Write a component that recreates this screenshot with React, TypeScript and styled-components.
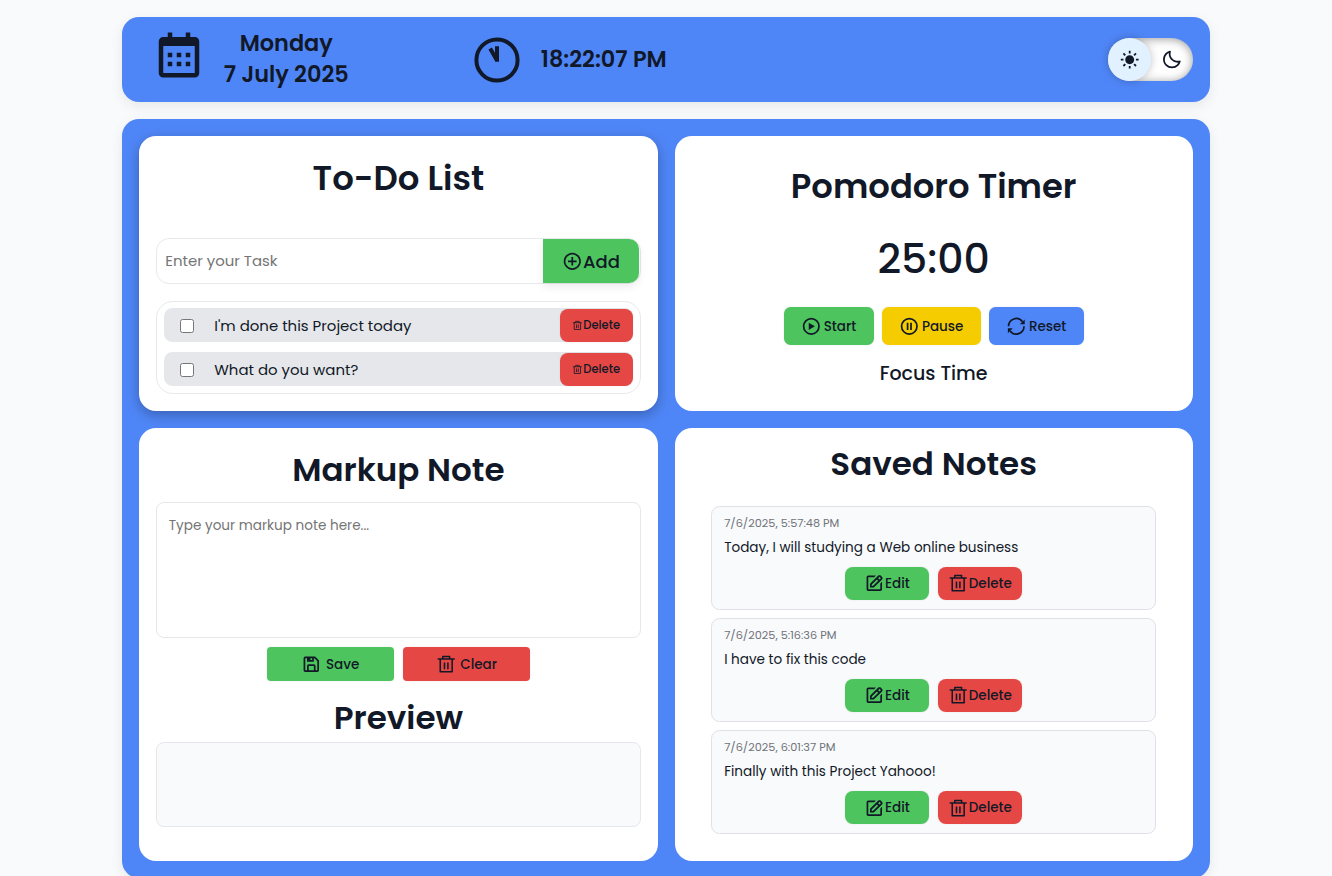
import React from "react";
import styled, { createGlobalStyle } from "styled-components";
import { BiCalendar, BiSolidSun, BiMoon, BiPlusCircle, BiSave, BiEdit } from "react-icons/bi";

const Global = createGlobalStyle`
  * { box-sizing: border-box; }
  html, body { margin: 0; height: 100%; overflow: hidden; }
  body { background: #f9fafc; color: #111827; font-family: Poppins, Inter, sans-serif; }
  button, input, textarea { font-family: inherit; color: inherit; margin: 0; }
  h1, h2, p { margin: 0; }
  svg { display: block; flex: none; }
`;

const tones = { green: "#4dc45d", red: "#e54844", yellow: "#f5cc00", blue: "#4f86f7" };
type Tone = keyof typeof tones;

const Page = styled.div`
  width: 1087.5px;
  margin: 0 auto;
  padding-top: 17px;
`;

const Header = styled.header`
  height: 85px;
  display: flex;
  align-items: center;
  padding: 0 16.5px 0 30.2px;
  border-radius: 17px;
  background: ${tones.blue};
  box-shadow: 0 4px 13px rgba(0, 0, 0, 0.08);
`;

const Calendar = styled.div`
  display: flex;
  align-items: center;
  height: 76px;
  padding-bottom: 9px;
`;

const HeaderText = styled.div`
  width: 126px;
  font-size: 22.4px;
  font-weight: 600;
  line-height: 31px;
  text-align: center;
  white-space: nowrap;
`;

const DateText = styled(HeaderText)`
  width: 140px;
  margin: 0 117.5px 0 9.8px;
  padding-bottom: 1.5px;
`;

const ClockFace = styled.svg`
  margin-right: 21px;
`;

const Toggle = styled.div`
  display: flex;
  width: 85px;
  height: 43px;
  margin-left: auto;
  border-radius: 22px;
  background: #fff;
  box-shadow: inset 0 1px 10px rgba(0, 0, 0, 0.4);
`;

const ToggleSide = styled.span<{ $active?: boolean }>`
  width: 43px;
  height: 43px;
  display: grid;
  place-items: center;
  border-radius: 50%;
  background: ${(p) => (p.$active ? "#e1f1ff" : "transparent")};
  box-shadow: ${(p) => (p.$active ? "0 0 9px rgba(0, 0, 0, 0.25)" : "none")};
`;

const Board = styled.main`
  display: grid;
  grid-template-columns: 1fr 1fr;
  grid-template-rows: 275px 433px;
  gap: 17px;
  height: 759px;
  margin-top: 17px;
  padding: 17px;
  border-radius: 17px;
  background: ${tones.blue};
  box-shadow: 0 4px 13px rgba(0, 0, 0, 0.08);
`;

const Card = styled.section<{ $raised?: boolean; $top: number }>`
  display: flex;
  flex-direction: column;
  align-items: center;
  padding: ${(p) => p.$top}px 17px 0;
  border-radius: 17px;
  background: #fff;
  box-shadow: ${(p) => (p.$raised ? "0 4px 13px rgba(0, 0, 0, 0.28)" : "none")};
`;

const Title = styled.h2<{ $size?: number }>`
  font-size: ${(p) => p.$size ?? 32.6}px;
  font-weight: 600;
  line-height: 50px;
  white-space: nowrap;
`;

const TaskForm = styled.div`
  display: flex;
  width: 100%;
  height: 46px;
  margin-top: 35px;
  padding-right: 1px;
  border: 1px solid #e8e9ec;
  border-radius: 13px;
`;

const TaskInput = styled.input`
  flex: 1;
  min-width: 0;
  padding: 0 8px;
  border: 0;
  outline: 0;
  background: transparent;
  font-size: 14.95px;
  &::placeholder { color: #757575; opacity: 1; }
`;

const AddButton = styled.button`
  display: flex;
  align-items: center;
  justify-content: center;
  width: 96px;
  padding: 0 0 0 1.5px;
  border: 0;
  border-radius: 0 10px 10px 0;
  background: ${tones.green};
  box-shadow: 0 4px 8px rgba(0, 0, 0, 0.08);
  font-size: 18px;
  font-weight: 500;
`;

const TaskList = styled.div`
  display: flex;
  flex-direction: column;
  gap: 10px;
  width: 100%;
  height: 93px;
  margin-top: 17px;
  padding: 6px 7px;
  border: 1px solid #e8e9ec;
  border-radius: 17px;
`;

const TaskRow = styled.label`
  display: flex;
  align-items: center;
  height: 34px;
  border-radius: 8.5px;
  background: #e5e7eb;
  font-size: 14.95px;
`;

const Check = styled.input`
  width: 14px;
  height: 14px;
  margin: 1px 20px 0 16px;
`;

const TaskName = styled.span`
  flex: 1;
  padding-top: 1.5px;
`;

const Button = styled.button<{
  $tone: Tone; $width: number; $height: number; $gap?: number;
  $size?: number; $radius?: number;
}>`
  display: flex;
  align-items: center;
  justify-content: center;
  gap: ${(p) => p.$gap ?? 0}px;
  width: ${(p) => p.$width}px;
  height: ${(p) => p.$height}px;
  padding: 0;
  border: 0;
  border-radius: ${(p) => p.$radius ?? 6.5}px;
  background: ${(p) => tones[p.$tone]};
  box-shadow: 0 0 2px rgba(0, 0, 0, 0.1);
  font-size: ${(p) => p.$size ?? 13.5}px;
  font-weight: 500;
`;

const Label = styled.span`
  padding-top: 1px;
`;

const ButtonRow = styled.div<{ $top: number; $gap: number }>`
  display: flex;
  justify-content: center;
  gap: ${(p) => p.$gap}px;
  margin-top: ${(p) => p.$top}px;
`;

const Countdown = styled.div`
  margin-top: 17px;
  font-size: 41px;
  font-weight: 500;
  line-height: 60px;
`;

const Mode = styled.p`
  margin-top: 14px;
  font-size: 19px;
  font-weight: 500;
  line-height: 30px;
`;

const NoteArea = styled.textarea`
  display: block;
  width: 100%;
  height: 136px;
  margin-top: 7px;
  padding: 13px 11.5px;
  border: 1px solid #e5e7eb;
  border-radius: 8px;
  outline: 0;
  resize: none;
  font-size: 13.6px;
  line-height: 20px;
  &::placeholder { color: #757575; opacity: 1; }
`;

const Preview = styled.div`
  width: 100%;
  height: 85px;
  margin-top: -1px;
  border: 1px solid #e5e7eb;
  border-radius: 8px;
  background: #f9fafc;
`;

const Notes = styled.div`
  display: flex;
  flex-direction: column;
  gap: 8.5px;
  width: 445px;
  margin-top: 17px;
`;

const Note = styled.article`
  height: 103.7px;
  padding: 7px 12px 0;
  border: 1px solid #dfe1e5;
  border-radius: 8.5px;
  background: #f9fafc;
`;

const NoteDate = styled.p`
  color: #6f7379;
  font-size: 11.3px;
  line-height: 18px;
`;

const NoteText = styled.p`
  margin-top: 6px;
  font-size: 13.58px;
  line-height: 20px;
`;

const TrashIcon = ({ size = 20.4 }: { size?: number }) => (
  <svg width={size} height={size} viewBox="0 0 24 24" fill="none" stroke="currentColor" strokeWidth="1.8" strokeLinejoin="round">
    <path d="M2 6h20M5 6v15h14V6M8 6V3h8v3M10 10v8M14 10v8" />
  </svg>
);

const PlayIcon = () => (
  <svg width="20.6" height="20.6" viewBox="0 0 24 24" fill="none" stroke="currentColor" strokeWidth="2">
    <circle cx="12" cy="12" r="9" />
    <path d="M9 7.8v8.4l7.2-4.2z" fill="currentColor" stroke="none" />
  </svg>
);

const PauseIcon = () => (
  <svg width="20.6" height="20.6" viewBox="0 0 24 24" fill="none" stroke="currentColor" strokeWidth="2">
    <circle cx="12" cy="12" r="9" />
    <path d="M10 7.8v8.4M14 7.8v8.4" />
  </svg>
);

const ResetIcon = () => (
  <svg width="20.6" height="20.6" viewBox="0 0 24 24" fill="none" stroke="currentColor" strokeWidth="2">
    <path d="M3 12A9 9 0 0 1 19.2 6.6M21 12A9 9 0 0 1 4.8 17.4" />
    <path d="M21.8 4v5.6h-5.6zM2.2 20v-5.6h5.6z" fill="currentColor" stroke="none" />
  </svg>
);

const tasks = ["I'm done this Project today", "What do you want?"];

const notes = [
  { date: "7/6/2025, 5:57:48 PM", text: "Today, I will studying a Web online business" },
  { date: "7/6/2025, 5:16:36 PM", text: "I have to fix this code" },
  { date: "7/6/2025, 6:01:37 PM", text: "Finally with this Project Yahooo!" },
];

export default function App() {
  return (
    <>
      <Global />
      <Page>
        <Header>
          <Calendar><BiCalendar size={54} /></Calendar>
          <DateText>Monday<br />7 July 2025</DateText>
          <ClockFace width="46" height="46" viewBox="0 0 46 46" fill="none" stroke="currentColor" strokeWidth="4">
            <circle cx="23" cy="23" r="20.6" />
            <path d="M23 9.3v15.5M16.2 11.4 23 23.4" />
          </ClockFace>
          <HeaderText>18:22:07 PM</HeaderText>
          <Toggle>
            <ToggleSide $active><BiSolidSun size={21.4} /></ToggleSide>
            <ToggleSide><BiMoon size={21.4} /></ToggleSide>
          </Toggle>
        </Header>
        <Board>
          <Card $raised $top={17}>
            <Title $size={33.9}>To-Do List</Title>
            <TaskForm>
              <TaskInput placeholder="Enter your Task" />
              <AddButton><BiPlusCircle size={20.6} />Add</AddButton>
            </TaskForm>
            <TaskList>
              {tasks.map((name) => (
                <TaskRow key={name}>
                  <Check type="checkbox" />
                  <TaskName>{name}</TaskName>
                  <Button $tone="red" $width={72.5} $height={33} $size={11.5} $radius={8}>
                    <TrashIcon size={10.8} />Delete
                  </Button>
                </TaskRow>
              ))}
            </TaskList>
          </Card>
          <Card $top={26}>
            <Title $size={33.8}>Pomodoro Timer</Title>
            <Countdown>25:00</Countdown>
            <ButtonRow $top={18} $gap={8.5}>
              <Button $tone="green" $width={90} $height={38} $gap={2}><PlayIcon /><Label>Start</Label></Button>
              <Button $tone="yellow" $width={98.5} $height={38} $gap={2}><PauseIcon /><Label>Pause</Label></Button>
              <Button $tone="blue" $width={94.5} $height={38} $gap={2}><ResetIcon /><Label>Reset</Label></Button>
            </ButtonRow>
            <Mode>Focus Time</Mode>
          </Card>
          <Card $top={17}>
            <Title>Markup Note</Title>
            <NoteArea placeholder="Type your markup note here..." />
            <ButtonRow $top={9} $gap={8.5}>
              <Button $tone="green" $width={127.5} $height={34} $gap={4} $radius={4}><BiSave size={20.6} /><Label>Save</Label></Button>
              <Button $tone="red" $width={127.5} $height={34} $gap={4} $radius={4}><TrashIcon /><Label>Clear</Label></Button>
            </ButtonRow>
            <ButtonRow $top={12} $gap={0}><Title>Preview</Title></ButtonRow>
            <Preview />
          </Card>
          <Card $top={11}>
            <Title>Saved Notes</Title>
            <Notes>
              {notes.map((n) => (
                <Note key={n.date}>
                  <NoteDate>{n.date}</NoteDate>
                  <NoteText>{n.text}</NoteText>
                  <ButtonRow $top={9} $gap={9.5}>
                    <Button $tone="green" $width={83.5} $height={33} $radius={8}><BiEdit size={20.6} />Edit</Button>
                    <Button $tone="red" $width={83.5} $height={33} $radius={8}><TrashIcon />Delete</Button>
                  </ButtonRow>
                </Note>
              ))}
            </Notes>
          </Card>
        </Board>
      </Page>
    </>
  );
}
